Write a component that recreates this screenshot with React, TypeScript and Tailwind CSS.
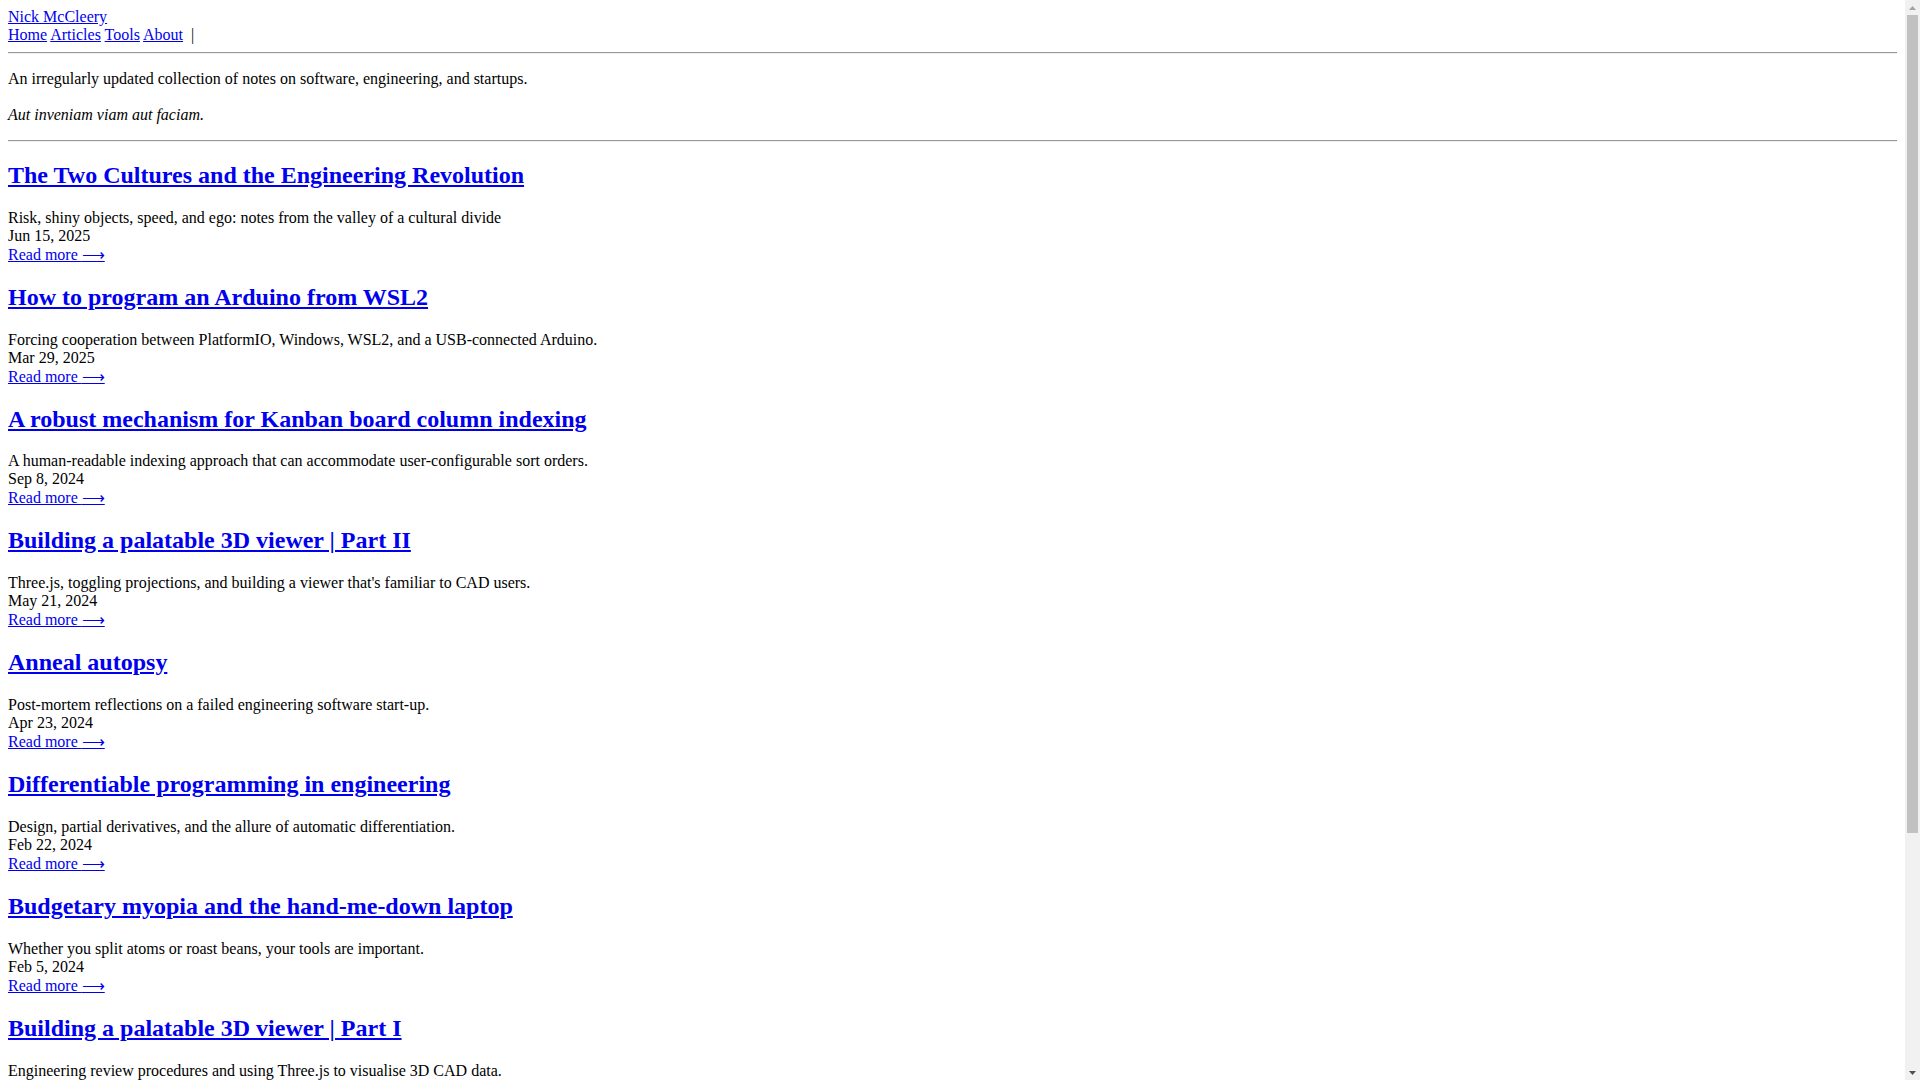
import React from 'react';

interface Post {
  title: string;
  summary: string;
  date: string;
}

const posts: Post[] = [
  {
    title: 'The Two Cultures and the Engineering Revolution',
    summary: 'Risk, shiny objects, speed, and ego: notes from the valley of a cultural divide',
    date: 'Jun 15, 2025',
  },
  {
    title: 'How to program an Arduino from WSL2',
    summary: 'Forcing cooperation between PlatformIO, Windows, WSL2, and a USB-connected Arduino.',
    date: 'Mar 29, 2025',
  },
  {
    title: 'A robust mechanism for Kanban board column indexing',
    summary: 'A human-readable indexing approach that can accommodate user-configurable sort orders.',
    date: 'Sep 8, 2024',
  },
  {
    title: 'Building a palatable 3D viewer | Part II',
    summary: "Three.js, toggling projections, and building a viewer that's familiar to CAD users.",
    date: 'May 21, 2024',
  },
  {
    title: 'Anneal autopsy',
    summary: 'Post-mortem reflections on a failed engineering software start-up.',
    date: 'Apr 23, 2024',
  },
  {
    title: 'Differentiable programming in engineering',
    summary: 'Design, partial derivatives, and the allure of automatic differentiation.',
    date: 'Feb 22, 2024',
  },
  {
    title: 'Budgetary myopia and the hand-me-down laptop',
    summary: 'Whether you split atoms or roast beans, your tools are important.',
    date: 'Feb 5, 2024',
  },
  {
    title: 'Building a palatable 3D viewer | Part I',
    summary: 'Engineering review procedures and using Three.js to visualise 3D CAD data.',
    date: 'Jan 28, 2024',
  },
];

const link = 'text-[#0000ee] underline';

function Rule() {
  return (
    <hr className="my-2 h-0 border-0 border-t border-b border-solid border-t-[#9a9a9a] border-b-[#eeeeee]" />
  );
}

// the browser's classic scrollbar, drawn so the frame matches
function Scrollbar() {
  return (
    <div className="w-[15px] shrink-0 h-full bg-[#f1f1f1] flex flex-col">
      <div className="h-[15px] flex items-center justify-center">
        <svg width="7" height="4" viewBox="0 0 7 4">
          <path d="M3.5 0 L7 4 L0 4 Z" fill="#a3a3a3" />
        </svg>
      </div>
      <div className="px-[2px]">
        <div className="h-[818px] bg-[#c1c1c1]" />
      </div>
      <div className="flex-1" />
      <div className="h-[15px] flex items-center justify-center">
        <svg width="7" height="4" viewBox="0 0 7 4">
          <path d="M0 0 L7 0 L3.5 4 Z" fill="#505050" />
        </svg>
      </div>
    </div>
  );
}

export default function App() {
  return (
    <div className="flex h-screen overflow-hidden bg-white">
      <div className="flex-1 min-w-0 overflow-hidden p-2 text-black text-[16px] leading-[normal] font-['Liberation_Serif','Times_New_Roman',serif]">
        {/* Header */}
        <header>
          <div>
            <a href="#" className={link}>Nick McCleery</a>
          </div>
          <nav>
            <a href="#" className={link}>Home</a>{' '}
            <a href="#" className={link}>Articles</a>{' '}
            <a href="#" className={link}>Tools</a>{' '}
            <a href="#" className={link}>About</a>{'\u00a0 |'}
          </nav>
        </header>

        <Rule />

        <p className="my-4">
          An irregularly updated collection of notes on software, engineering, and startups.
          <br />
          <br />
          <em>Aut inveniam viam aut faciam.</em>
        </p>

        <Rule />

        {/* Posts */}
        {posts.map((post) => (
          <article key={post.title}>
            <h2 className="text-[24px] font-bold my-[0.83em]">
              <a href="#" className={link}>{post.title}</a>
            </h2>
            <p className="my-4">
              {post.summary}
              <br />
              {post.date}
              <br />
              <a href="#" className={link}>Read more {'\u27f6'}</a>
            </p>
          </article>
        ))}
      </div>
      <Scrollbar />
    </div>
  );
}
